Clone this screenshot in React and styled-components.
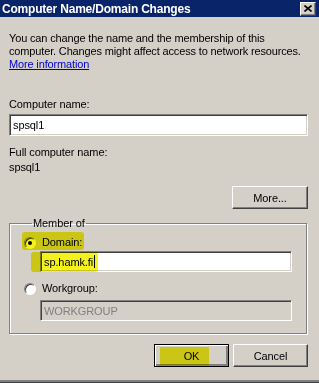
import React from 'react';
import styled, { createGlobalStyle } from 'styled-components';

const GlobalStyle = createGlobalStyle`
  html, body {
    margin: 0;
    padding: 0;
    background: #d4d0c8;
  }
  * {
    box-sizing: border-box;
  }
`;

const Window = styled.div`
  position: relative;
  width: 319px;
  height: 383px;
  overflow: hidden;
  display: flex;
  flex-direction: column;
  background: #d4d0c8;
  font-family: "Liberation Sans", Arial, sans-serif;
  font-size: 11px;
  letter-spacing: -0.1px;
  color: #000;
  border-bottom: 1px solid #404040;
  box-shadow: inset 0 -2px 0 #808080;
`;

const TitleBar = styled.div`
  height: 17px;
  flex: none;
  display: flex;
  align-items: center;
  justify-content: space-between;
  padding: 0 3px 0 2px;
  background: #0a246a;
`;

const TitleText = styled.span`
  color: #fff;
  font-weight: bold;
  font-size: 12px;
  letter-spacing: -0.2px;
`;

const CloseButton = styled.div`
  width: 16px;
  height: 14px;
  display: flex;
  align-items: center;
  justify-content: center;
  background: #d4d0c8;
  border: 1px solid;
  border-color: #fff #404040 #404040 #fff;
  box-shadow: inset -1px -1px 0 #808080;
`;

const Content = styled.div`
  display: flex;
  flex-direction: column;
  padding: 0 11px 0 9px;
`;

const Intro = styled.p`
  margin: 15px 0 0;
  line-height: 13px;
  white-space: nowrap;
  letter-spacing: -0.15px;
`;

const Link = styled.a`
  color: #0000cc;
  text-decoration: underline;
`;

const Label = styled.div`
  line-height: 13px;
  margin-top: ${p => p.$gap || 0}px;
`;

const TextBox = styled.div`
  height: ${p => p.$h || 21}px;
  margin-top: ${p => p.$gap || 0}px;
  margin-left: ${p => p.$indent || 0}px;
  display: flex;
  align-items: center;
  padding: 0 3px;
  background: ${p => (p.$disabled ? '#d4d0c8' : '#fff')};
  color: ${p => (p.$disabled ? '#808080' : '#000')};
  border: 1px solid;
  border-color: #808080 #fff #fff #808080;
  box-shadow: inset 1px 1px 0 #404040, inset -1px -1px 0 #d4d0c8;
`;

const Caret = styled.span`
  display: inline-block;
  width: 1px;
  height: 13px;
  margin-left: 1px;
  background: #000;
`;

const ButtonRow = styled.div`
  display: flex;
  justify-content: flex-end;
  gap: 4px;
  margin-top: ${p => p.$gap || 0}px;
`;

const Button = styled.div`
  width: ${p => p.$w || 75}px;
  height: 23px;
  display: flex;
  align-items: center;
  justify-content: center;
  background: #d4d0c8;
  border: 1px solid;
  border-color: #fff #404040 #404040 #fff;
  box-shadow: inset -1px -1px 0 #808080;
  ${p =>
    p.$default &&
    `
    border: 1px solid #000;
    box-shadow: inset 1px 1px 0 #fff, inset -2px -2px 0 #808080, inset -1px -1px 0 #404040;
  `}
`;

const GroupBox = styled.fieldset`
  margin: 8px 1px 0 0;
  padding: 6px 14px 12px 14px;
  border: 1px solid #808080;
  box-shadow: 1px 1px 0 #fff, inset 1px 1px 0 #fff;
  min-width: 0;
`;

const Legend = styled.legend`
  padding: 0 1px;
  margin-left: 8px;
  line-height: 13px;
`;

const RadioRow = styled.div`
  display: flex;
  align-items: center;
  gap: 6px;
  line-height: 13px;
  margin-top: ${p => p.$gap || 0}px;
`;

const Radio = styled.span`
  position: relative;
  width: 12px;
  height: 12px;
  flex: none;
  border-radius: 50%;
  background: #fff;
  border: 1px solid;
  border-color: #808080 #fff #fff #808080;
  box-shadow: inset 1px 1px 0 #404040;

  &::after {
    content: '';
    display: ${p => (p.$checked ? 'block' : 'none')};
    position: absolute;
    left: 3px;
    top: 3px;
    width: 4px;
    height: 4px;
    border-radius: 50%;
    background: #000;
  }
`;

const Highlight = styled.div`
  position: absolute;
  background: #f4f21c;
  mix-blend-mode: multiply;
  border-radius: 3px;
  pointer-events: none;
`;

export default function App() {
  return (
    <>
      <GlobalStyle />
      <Window>
        <TitleBar>
          <TitleText>Computer Name/Domain Changes</TitleText>
          <CloseButton>
            <svg width="8" height="7" viewBox="0 0 8 7">
              <path d="M0.5 0.5 L7.5 6.5 M7.5 0.5 L0.5 6.5" stroke="#000" strokeWidth="1.6" />
            </svg>
          </CloseButton>
        </TitleBar>
        <Content>
          <Intro>
            You can change the name and the membership of this
            <br />
            computer. Changes might affect access to network resources.
            <br />
            <Link href="#">More information</Link>
          </Intro>

          <Label $gap={27}>Computer name:</Label>
          <TextBox $gap={3} $h={22}>spsql1</TextBox>

          <Label $gap={10}>Full computer name:</Label>
          <Label $gap={2}>spsql1</Label>

          <ButtonRow $gap={12}>
            <Button $w={76}>More...</Button>
          </ButtonRow>

          <GroupBox>
            <Legend>Member of</Legend>
            <RadioRow>
              <Radio $checked />
              Domain:
            </RadioRow>
            <TextBox $gap={2} $indent={16}>
              sp.hamk.fi
              <Caret />
            </TextBox>
            <RadioRow $gap={10}>
              <Radio />
              Workgroup:
            </RadioRow>
            <TextBox $gap={5} $indent={16} $disabled>
              WORKGROUP
            </TextBox>
          </GroupBox>

          <ButtonRow $gap={10}>
            <Button $default>OK</Button>
            <Button>Cancel</Button>
          </ButtonRow>
        </Content>

        <Highlight style={{ left: 22, top: 232, width: 62, height: 18 }} />
        <Highlight style={{ left: 31, top: 252, width: 67, height: 20 }} />
        <Highlight style={{ left: 160, top: 347, width: 49, height: 18, borderRadius: 1 }} />
      </Window>
    </>
  );
}
